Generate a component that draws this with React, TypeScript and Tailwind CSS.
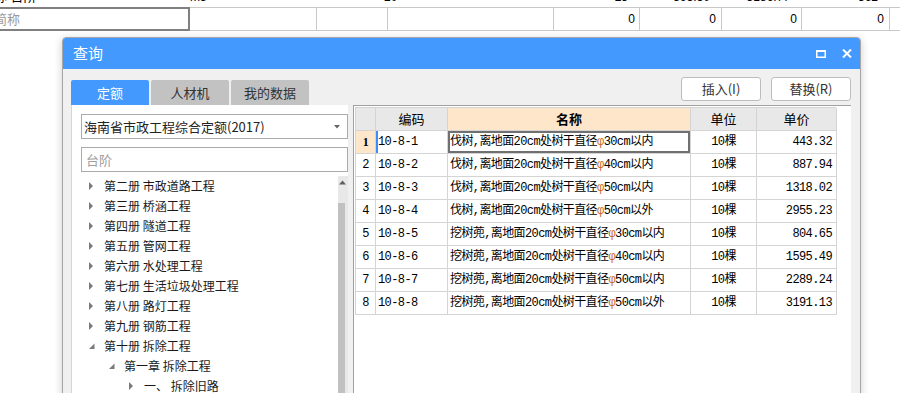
import React from "react";

const rows = [
  { code: "10-8-1", name: "伐树,离地面20cm处树干直径", size: "30cm以内", price: "443.32" },
  { code: "10-8-2", name: "伐树,离地面20cm处树干直径", size: "40cm以内", price: "887.94" },
  { code: "10-8-3", name: "伐树,离地面20cm处树干直径", size: "50cm以内", price: "1318.02" },
  { code: "10-8-4", name: "伐树,离地面20cm处树干直径", size: "50cm以外", price: "2955.23" },
  { code: "10-8-5", name: "挖树蔸,离地面20cm处树干直径", size: "30cm以内", price: "804.65" },
  { code: "10-8-6", name: "挖树蔸,离地面20cm处树干直径", size: "40cm以内", price: "1595.49" },
  { code: "10-8-7", name: "挖树蔸,离地面20cm处树干直径", size: "50cm以内", price: "2289.24" },
  { code: "10-8-8", name: "挖树蔸,离地面20cm处树干直径", size: "50cm以外", price: "3191.13" },
];

const tree = [
  { label: "第二册 市政道路工程", level: 0, open: false },
  { label: "第三册 桥涵工程", level: 0, open: false },
  { label: "第四册 隧道工程", level: 0, open: false },
  { label: "第五册 管网工程", level: 0, open: false },
  { label: "第六册 水处理工程", level: 0, open: false },
  { label: "第七册 生活垃圾处理工程", level: 0, open: false },
  { label: "第八册 路灯工程", level: 0, open: false },
  { label: "第九册 钢筋工程", level: 0, open: false },
  { label: "第十册 拆除工程", level: 0, open: true },
  { label: "第一章 拆除工程", level: 1, open: true },
  { label: "一、 拆除旧路", level: 2, open: false },
];

const indent: Record<number, string> = {
  0: "pl-[16px]",
  1: "pl-[36px]",
  2: "pl-[56px]",
};

function Arrow({ open }: { open: boolean }) {
  if (open) {
    return (
      <svg width="16" height="10" viewBox="0 0 16 10" className="shrink-0">
        <path d="M6.5 2.5 L6.5 8 L1 8 Z" fill="#7a7a7a" />
      </svg>
    );
  }
  return (
    <svg width="16" height="10" viewBox="0 0 16 10" className="shrink-0">
      <path d="M1 1 L5 5 L1 9 Z" fill="#7a7a7a" />
    </svg>
  );
}

function Sheet() {
  return (
    <div className="font-['Liberation_Sans','Noto_Sans_CJK_SC',sans-serif] text-[12px] text-black">
      <div className="h-[8px] overflow-hidden border-b border-[#c8c8c8]">
        <div className="-mt-[15px] flex h-[23px] items-center">
          <div className="w-[190px] shrink-0 -ml-[6px] text-[13px]">称 台阶</div>
          <div className="w-[127px] shrink-0 pl-[6px]">m3</div>
          <div className="w-[71px] shrink-0" />
          <div className="w-[166px] shrink-0 pl-[2px]">20</div>
          <div className="w-[86px] shrink-0 pr-[6px] text-right">25</div>
          <div className="w-[82px] shrink-0 pr-[6px] text-right">395.50</div>
          <div className="w-[80px] shrink-0 pr-[6px] text-right">3186.77</div>
          <div className="w-[88px] shrink-0 pr-[6px] text-right">362</div>
        </div>
      </div>
      <div className="flex h-[23px] items-stretch border-b border-[#c8c8c8]">
        <div className="-ml-[2px] flex w-[192px] shrink-0 items-center overflow-hidden border-2 border-[#808080] -mt-[1px] h-[24px]">
          <span className="-ml-[6px] text-[13px] text-[#9a9a9a] font-['Noto_Sans_CJK_SC',sans-serif]">简称</span>
        </div>
        <div className="w-[127px] shrink-0 border-r border-[#c8c8c8]" />
        <div className="w-[71px] shrink-0 border-r border-[#c8c8c8]" />
        <div className="w-[166px] shrink-0 border-r border-[#c8c8c8]" />
        <div className="flex w-[86px] shrink-0 items-center justify-end border-r border-[#c8c8c8] pr-[4px]">0</div>
        <div className="flex w-[82px] shrink-0 items-center justify-end border-r border-[#c8c8c8] pr-[5px]">0</div>
        <div className="flex w-[80px] shrink-0 items-center justify-end border-r border-[#c8c8c8] pr-[4px]">0</div>
        <div className="flex w-[88px] shrink-0 items-center justify-end border-r border-[#c8c8c8] pr-[5px]">0</div>
      </div>
    </div>
  );
}

function Grid() {
  const cell = "border-r border-b border-[#d4d4d4] flex items-center h-[23px]";
  return (
    <div className="grid w-[481px] grid-cols-[20px_72px_243px_66px_80px] border-l border-t border-[#d4d4d4] font-['Liberation_Mono','Noto_Sans_CJK_SC',monospace] text-[12px] tracking-[-0.6px] text-black">
      <div className={`${cell} bg-[#e8e8e8]`} />
      <div className={`${cell} justify-center bg-[#e8e8e8] font-['Noto_Sans_CJK_SC',sans-serif] text-[13px] tracking-normal`}>编码</div>
      <div className={`${cell} justify-center bg-[#fde6c9] font-['Noto_Sans_CJK_SC',sans-serif] text-[13px] font-bold tracking-normal`}>名称</div>
      <div className={`${cell} justify-center bg-[#e8e8e8] font-['Noto_Sans_CJK_SC',sans-serif] text-[13px] tracking-normal`}>单位</div>
      <div className={`${cell} justify-center bg-[#e8e8e8] font-['Noto_Sans_CJK_SC',sans-serif] text-[13px] tracking-normal`}>单价</div>
      {rows.map((r, i) => (
        <React.Fragment key={r.code}>
          <div className={`${cell} justify-center ${i === 0 ? "bg-[#fde6c9] font-bold font-['Liberation_Serif',serif]" : ""}`}>
            {i + 1}
          </div>
          <div className={`${cell} pl-[2px] ${i === 0 ? "shadow-[inset_2px_0_0_#3d8cff]" : ""}`}>{r.code}</div>
          <div className={`${cell} pl-[2px] whitespace-nowrap ${i === 0 ? "shadow-[inset_0_0_0_2px_#707070]" : ""}`}>
            {r.name}
            <span className="text-[#c8661a]">φ</span>
            {r.size}
          </div>
          <div className={`${cell} justify-center`}>10棵</div>
          <div className={`${cell} justify-end pr-[4px]`}>{r.price}</div>
        </React.Fragment>
      ))}
    </div>
  );
}

function Dialog() {
  return (
    <div className="absolute left-[62px] top-[37px] w-[799px] h-[380px] rounded-t-[4px] border border-[#a6a6a6] bg-[#f0f0f0] shadow-[0_2px_8px_rgba(0,0,0,0.2)] font-['Noto_Sans_CJK_SC',sans-serif]">
      <div className="flex h-[31px] items-center justify-between rounded-t-[3px] bg-[#4499ff] pl-[10px] pr-[8px]">
        <span className="text-[15px] text-white">查询</span>
        <div className="flex items-center gap-[16px]">
          <svg width="10" height="8" viewBox="0 0 10 8">
            <rect x="0.75" y="1" width="8.5" height="6.25" fill="none" stroke="white" strokeWidth="1.5" />
            <rect x="0" y="0" width="10" height="2" fill="white" />
          </svg>
          <svg width="10" height="9" viewBox="0 0 10 9">
            <path d="M1 0.5 L9 8.5 M9 0.5 L1 8.5" stroke="white" strokeWidth="2" />
          </svg>
        </div>
      </div>

      <div className="flex h-[36px] items-end justify-between pl-[8px] pr-[9px]">
        <div className="flex gap-[2px]">
          <div className="flex h-[25px] w-[78px] items-center justify-center rounded-t-[2px] bg-[#4499ff] text-[13px] text-white">定额</div>
          <div className="flex h-[25px] w-[78px] items-center justify-center rounded-t-[2px] bg-[#c2c2c2] text-[13px] text-[#333]">人材机</div>
          <div className="flex h-[25px] w-[78px] items-center justify-center rounded-t-[2px] bg-[#c2c2c2] text-[13px] text-[#333]">我的数据</div>
        </div>
        <div className="mb-[4px] flex gap-[10px]">
          <button className="h-[24px] w-[80px] rounded-[3px] border border-[#bdbdbd] bg-white text-[13px] text-[#333]">插入(I)</button>
          <button className="h-[24px] w-[80px] rounded-[3px] border border-[#bdbdbd] bg-white text-[13px] text-[#333]">替换(R)</button>
        </div>
      </div>

      <div className="flex h-[300px] pl-[8px]">
        <div className="flex w-[277px] flex-col border-l border-[#d6d6d6] bg-white">
          <div className="ml-[9px] mt-[9px] flex h-[25px] w-[267px] items-center justify-between border border-[#ababab] pl-[2px] pr-[7px] text-[13px] text-[#222]">
            <span>海南省市政工程综合定额(2017)</span>
            <svg width="6" height="4" viewBox="0 0 6 4">
              <path d="M0 0 L6 0 L3 3.5 Z" fill="#666" />
            </svg>
          </div>
          <div className="ml-[9px] mt-[8px] flex h-[25px] w-[267px] items-center border border-[#ababab] pl-[4px] text-[13px] text-[#a0a0a0]">
            台阶
          </div>
          <div className="mt-[4px] flex flex-1">
            <div className="flex-1">
              {tree.map((t) => (
                <div key={t.label} className={`flex h-[20px] items-center ${indent[t.level]} text-[12px] text-[#1a1a1a] whitespace-pre`}>
                  <Arrow open={t.open} />
                  <span>{t.label}</span>
                </div>
              ))}
            </div>
            <div className="flex w-[10px] flex-col items-start bg-[#e8e8e8]">
              <svg width="9" height="9" viewBox="0 0 9 9" className="mt-[2px]">
                <path d="M1 6.5 L4.5 2.5 L8 6.5 Z" fill="#606060" />
              </svg>
              <div className="mt-[16px] h-[200px] w-[7px] bg-[#c1c1c1]" />
            </div>
          </div>
        </div>

        <div className="ml-[5px] w-[498px] border-l border-t border-[#a0a0a0] bg-white pl-[1px] pt-[1px]">
          <Grid />
        </div>
      </div>
    </div>
  );
}

export default function App() {
  return (
    <div className="relative h-[393px] w-[900px] overflow-hidden bg-white">
      <Sheet />
      <Dialog />
    </div>
  );
}
